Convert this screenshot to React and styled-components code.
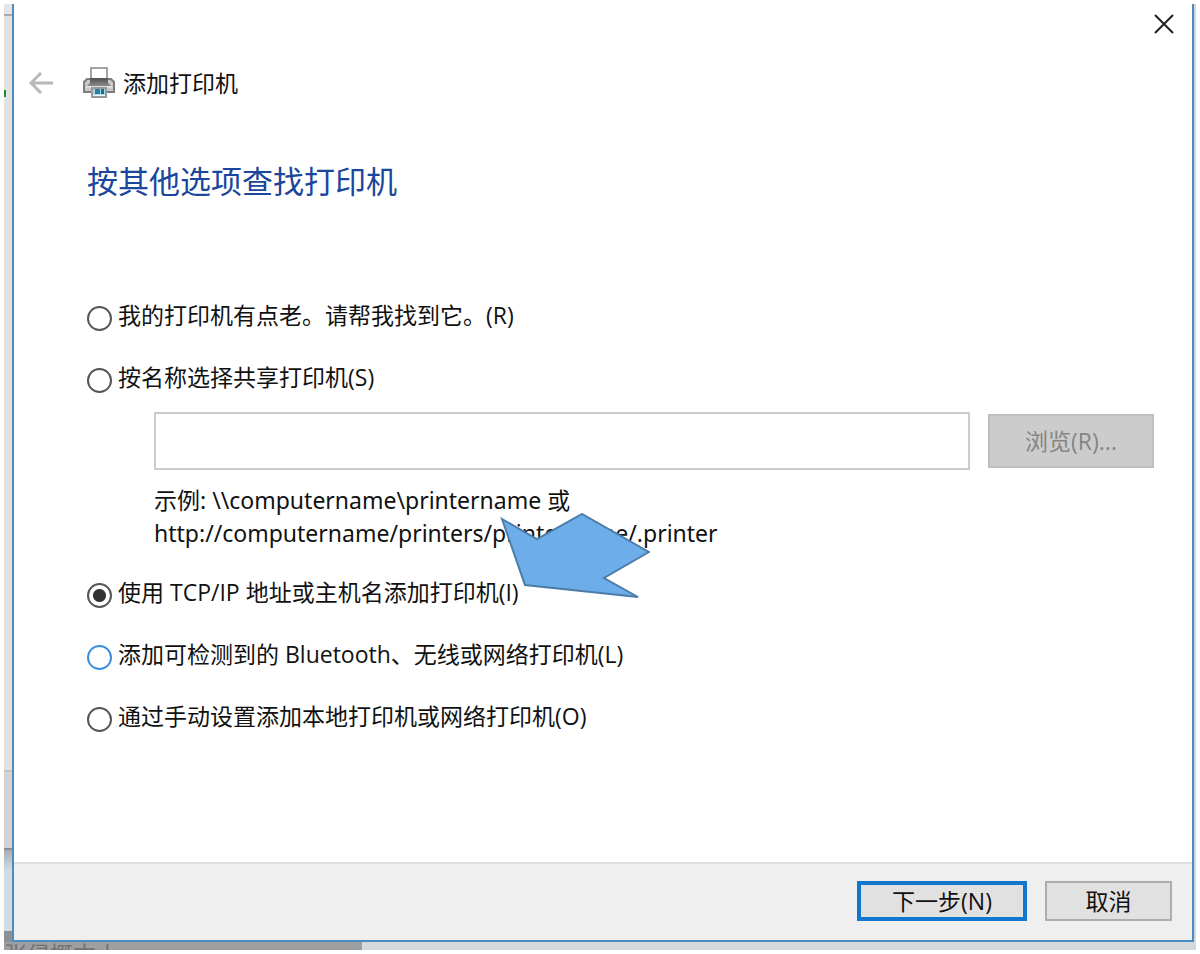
import React, { useState } from 'react';
import styled, { createGlobalStyle } from 'styled-components';

const GlobalStyle = createGlobalStyle`
	* {
		box-sizing: border-box;
	}
	body {
		margin: 0;
		background: #fff;
		color: #111;
		font-family: 'Open Sans', 'Noto Sans CJK SC', sans-serif;
		font-size: 23px;
		line-height: 32px;
	}
	button,
	input {
		font: inherit;
	}
`;

function PrinterIcon() {
	return (
		<svg width='32' height='32' viewBox='0 0 32 32' aria-hidden='true'>
			<defs>
				<linearGradient id='body' x1='0' y1='0' x2='0' y2='1'>
					<stop offset='0' stopColor='#505050' />
					<stop offset='1' stopColor='#8c8c8c' />
				</linearGradient>
			</defs>
			<path d='M8 1h16v11H8z' fill='#fff' stroke='#a3a3a3' strokeWidth='2' />
			<path d='M4 12h24l3 3v10H1V15z' fill='#c8c8c8' stroke='#7d7d7d' strokeWidth='2' />
			<path d='M7 11h18v5l3 3H4l3-3z' fill='url(#body)' />
			<path d='M3 20h26' stroke='#ddd' strokeWidth='2' />
			<path d='M9 21h14v9H9z' fill='#f4fafc' stroke='#999' strokeWidth='2' />
			<path d='M10 22h12v6H10z' fill='#a9dbe8' />
			<path d='M12 22h5v5h-5z' fill='#2a7fa0' />
			<path d='M18 22h3v5h-3z' fill='#1f6a85' />
		</svg>
	);
}

function Option({ value, selected, onSelect, hot, children }) {
	return (
		<OptionLabel>
			<Radio
				type='radio'
				name='method'
				value={value}
				checked={selected === value}
				onChange={() => onSelect(value)}
				$hot={hot}
			/>
			<span>{children}</span>
		</OptionLabel>
	);
}

function App() {
	const [method, setMethod] = useState('tcpip');
	const [shareName, setShareName] = useState('');

	return (
		<Desktop>
			<GlobalStyle />
			<WindowRow>
				<BehindStrip>
					<BehindCap />
					<BehindPage>
						<GreenMark />
					</BehindPage>
					<BehindFooter />
					<BehindGap />
					<BehindShade />
				</BehindStrip>
				<Dialog>
					<TitleBar>
						<IconButton aria-label='关闭'>
							<svg width='20' height='20' viewBox='0 0 20 20'>
								<path d='M1 1l18 18M19 1L1 19' stroke='#222' strokeWidth='2' />
							</svg>
						</IconButton>
					</TitleBar>
					<Header>
						<IconButton aria-label='返回'>
							<svg width='24' height='22' viewBox='0 0 24 22'>
								<path d='M24 11H2M12 1L2 11l10 10' fill='none' stroke='#b8b8b8' strokeWidth='3' />
							</svg>
						</IconButton>
						<WizardName>
							<PrinterIcon />
							<span>添加打印机</span>
						</WizardName>
					</Header>
					<Content>
						<Heading>按其他选项查找打印机</Heading>
						<Options>
							<Option value='old' selected={method} onSelect={setMethod}>
								我的打印机有点老。请帮我找到它。(R)
							</Option>
							<Option value='shared' selected={method} onSelect={setMethod}>
								按名称选择共享打印机(S)
							</Option>
							<ShareRow>
								<ShareInput
									type='text'
									aria-label='共享打印机名称'
									value={shareName}
									onChange={(e) => setShareName(e.target.value)}
								/>
								<BrowseButton disabled>浏览(R)...</BrowseButton>
							</ShareRow>
							<Example>
								示例: \\computername\printername 或
								<br />
								http://computername/printers/printername/.printer
								<Pointer width='150' height='90' viewBox='0 0 150 90' aria-hidden='true'>
									<path
										d='M2 6L37 26L82 1L149 39L104 65L138 84L25 72Z'
										fill='#6cadea'
										stroke='#4c7ca8'
										strokeWidth='2'
									/>
								</Pointer>
							</Example>
							<Option value='tcpip' selected={method} onSelect={setMethod}>
								使用 TCP/IP 地址或主机名添加打印机(I)
							</Option>
							<Option value='bluetooth' selected={method} onSelect={setMethod} hot>
								添加可检测到的 Bluetooth、无线或网络打印机(L)
							</Option>
							<Option value='manual' selected={method} onSelect={setMethod}>
								通过手动设置添加本地打印机或网络打印机(O)
							</Option>
						</Options>
					</Content>
					<Footer>
						<NextButton>下一步(N)</NextButton>
						<CancelButton>取消</CancelButton>
					</Footer>
				</Dialog>
			</WindowRow>
			<Taskbar>
				<TaskbarText>张侵概本丄</TaskbarText>
			</Taskbar>
		</Desktop>
	);
}

export default App;

const Desktop = styled.div`
	display: flex;
	flex-direction: column;
	min-height: 100vh;
	padding: 4px;
`;

const WindowRow = styled.div`
	display: flex;
	flex: 1;
	border-right: 2px solid #d3d6da;
`;

// what can be seen of the window behind the dialog
const BehindStrip = styled.div`
	display: flex;
	flex-direction: column;
	width: 8px;
`;

const BehindCap = styled.div`
	height: 12px;
	background: #e6e6e6;
	border-bottom: 2px solid #aaa;
`;

const BehindPage = styled.div`
	flex: 1;
	padding-top: 74px;
	background: #e2e2df;
`;

const GreenMark = styled.div`
	width: 2px;
	height: 7px;
	background: #14913a;
`;

const BehindFooter = styled.div`
	height: 80px;
	background: #d4d4d4;
	border-top: 2px solid #c2c2c2;
	border-bottom: 2px solid #8c8c8c;
`;

const BehindGap = styled.div`
	height: 81px;
	background: linear-gradient(#a8adb2, #d3dae4 20px, #d3dae4);
`;

const BehindShade = styled.div`
	height: 11px;
	background: #8e9193;
`;

const Dialog = styled.main`
	display: flex;
	flex-direction: column;
	flex: 1;
	border: 2px solid #4a8cc2;
	border-top: 0;
	background: #fff;
`;

const TitleBar = styled.div`
	display: flex;
	justify-content: flex-end;
	padding: 10px 18px 0 0;
`;

const IconButton = styled.button`
	display: flex;
	padding: 0;
	border: 0;
	background: none;
`;

const Header = styled.header`
	display: flex;
	align-items: center;
	gap: 30px;
	padding: 33px 15px 0;
`;

const WizardName = styled.div`
	display: flex;
	align-items: center;
	gap: 8px;
`;

const Content = styled.section`
	flex: 1;
	padding: 61px 38px 0 73px;
`;

const Heading = styled.h1`
	margin: 0;
	color: #1a469c;
	font-size: 31px;
	font-weight: 400;
	line-height: 42px;
`;

const Options = styled.div`
	display: flex;
	flex-direction: column;
	gap: 30px;
	margin-top: 97px;
`;

const OptionLabel = styled.label`
	display: flex;
	align-items: center;
	gap: 6px;
`;

const Radio = styled.input`
	appearance: none;
	width: 25px;
	height: 25px;
	margin: 6px 0 0;
	border: 2px solid ${(props) => (props.$hot ? '#3b8fdc' : '#555')};
	border-radius: 50%;
	background: #fff;
	&:checked {
		background: radial-gradient(circle, #333 6px, #fff 7px);
	}
`;

const ShareRow = styled.div`
	display: flex;
	align-items: center;
	gap: 18px;
	margin: -11px 0 -16px 67px;
`;

const ShareInput = styled.input`
	flex: 1;
	min-width: 0;
	height: 58px;
	padding: 0 10px;
	border: 2px solid #ccc;
	background: #fff;
`;

const Example = styled.p`
	position: relative;
	margin: 0 0 -4px 67px;
	font-family: 'Noto Sans', 'Noto Sans CJK SC', sans-serif;
	line-height: 33px;
`;

// callout arrow lying over the example and the next option
const Pointer = styled.svg`
	position: absolute;
	top: 29px;
	left: 346px;
`;

const Footer = styled.footer`
	display: flex;
	justify-content: flex-end;
	gap: 18px;
	padding: 17px 20px 19px;
	border-top: 2px solid #dfdfdf;
	background: #efefef;
`;

const Button = styled.button`
	height: 40px;
	padding: 0;
	border: 2px solid #adadad;
	background: #e1e1e1;
	color: #111;
`;

const NextButton = styled(Button)`
	width: 170px;
	border: 4px solid #1277cf;
`;

const CancelButton = styled(Button)`
	width: 127px;
`;

const BrowseButton = styled(Button)`
	width: 166px;
	height: 54px;
	border-color: #bfbfbf;
	background: #ccc;
	color: #858585;
`;

const Taskbar = styled.div`
	height: 8px;
	overflow: hidden;
	background: linear-gradient(to right, #9d9fa1 358px, #d6d9dc 358px);
`;

const TaskbarText = styled.span`
	display: block;
	color: #727272;
	line-height: 24px;
`;
